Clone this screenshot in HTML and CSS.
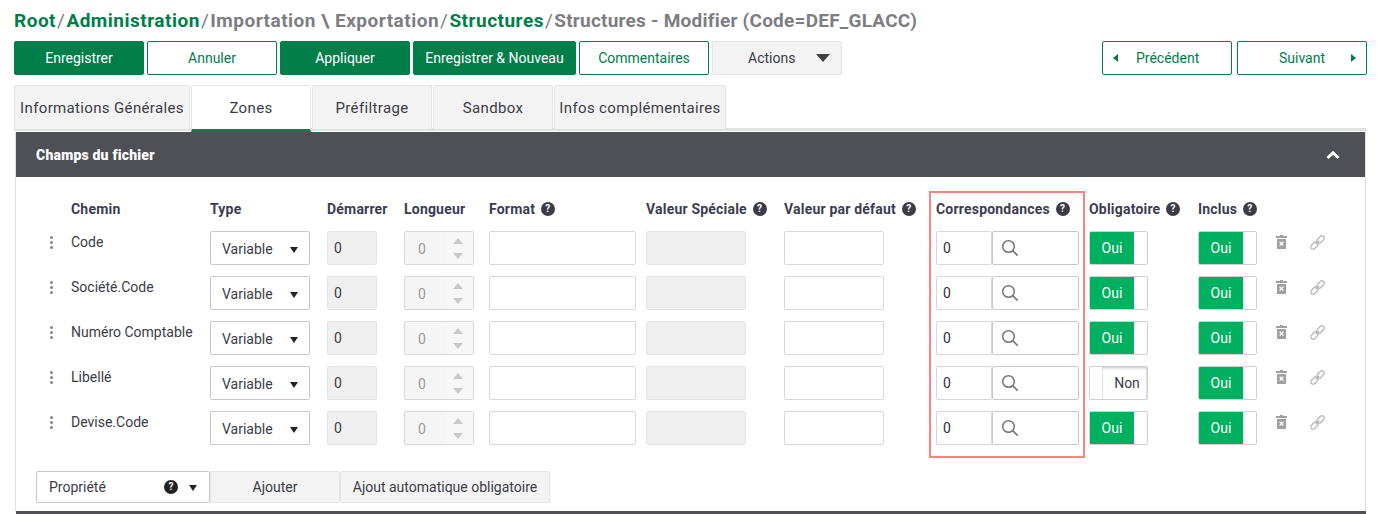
FILE: index.html
```html
<!DOCTYPE html>
<html lang="fr">
<head>
  <meta charset="UTF-8" />
  <title>Structures - Modifier</title>
  <link rel="stylesheet" href="styles.css">
</head>
<body>
  <svg class="defs" width="0" height="0">
    <symbol id="i-search" viewBox="0 0 18 18"><circle cx="7.5" cy="7.5" r="5.800" fill="none" stroke="#7b7673" stroke-width="1.500"/><path d="M11.700 11.700l5 5" stroke="#7b7673" stroke-width="1.700" fill="none"/></symbol>
    <symbol id="i-trash" viewBox="0 0 11 14"><path d="M4 0h3v1h4v2H0V1h4zM1 4h9v10H1z" fill="#a0a0a0"/><path d="M3.600 6.800l3.800 3.800M7.400 6.800l-3.800 3.800" stroke="#fff" stroke-width="1.300"/></symbol>
    <symbol id="i-link" viewBox="0 0 15 15"><g fill="none" stroke="#b5b5b5" stroke-width="1.200" transform="rotate(-45 7.500 7.500)"><rect x="-1" y="5.200" width="8.500" height="4.600" rx="2.300"/><rect x="7.500" y="5.200" width="8.500" height="4.600" rx="2.300"/><path d="M5 7.500h5"/></g></symbol>
  </svg>

  <div class="breadcrumb">
    <a>Root</a><i>/</i><a>Administration</a><i>/</i><span>Importation \ Exportation</span><i>/</i><a>Structures</a><i>/</i><span class="current">Structures - Modifier (Code=DEF_GLACC)</span>
  </div>

  <div class="toolbar">
    <button class="btn primary">Enregistrer</button>
    <button class="btn outline">Annuler</button>
    <button class="btn primary">Appliquer</button>
    <button class="btn primary wide">Enregistrer &amp; Nouveau</button>
    <button class="btn outline">Commentaires</button>
    <button class="btn plain actions">Actions<b class="caret-big"></b></button>
    <div class="pager">
      <button class="btn outline prev"><b class="arrow-left"></b>Précédent</button>
      <button class="btn outline next">Suivant<b class="arrow-right"></b></button>
    </div>
  </div>

  <div class="tabs">
    <div class="tab first">Informations Générales</div>
    <div class="tab active">Zones</div>
    <div class="tab">Préfiltrage</div>
    <div class="tab">Sandbox</div>
    <div class="tab last">Infos complémentaires</div>
  </div>

  <div class="panel">
    <div class="panel-head">
      <span>Champs du fichier</span>
      <svg class="chevron" width="14" height="10" viewBox="0 0 14 10"><path d="M1.500 8L7 2.800 12.500 8" fill="none" stroke="#fff" stroke-width="3"/></svg>
    </div>

    <div class="fields">
      <div class="red-box"></div>

      <div class="row head">
        <div></div>
        <div>Chemin</div>
        <div>Type</div>
        <div>Démarrer</div>
        <div>Longueur</div>
        <div>Format <em>?</em></div>
        <div>Valeur Spéciale <em>?</em></div>
        <div>Valeur par défaut <em>?</em></div>
        <div>Correspondances <em>?</em></div>
        <div>Obligatoire <em>?</em></div>
        <div>Inclus <em>?</em></div>
      </div>

      <div class="row">
        <div class="drag"><s></s><s></s><s></s></div>
        <div class="path">Code</div>
        <div class="select">Variable<b></b></div>
        <div class="readonly start">0</div>
        <div class="spin">0<span><b></b><b></b></span></div>
        <div class="input format"></div>
        <div class="readonly special"></div>
        <div class="input default"></div>
        <div class="match"><div class="input num">0</div><div class="input find"><svg width="18" height="18"><use href="#i-search"/></svg></div></div>
        <div class="toggle on"><span>Oui</span><i></i></div>
        <div class="toggle on"><span>Oui</span><i></i></div>
        <svg class="trash" width="11" height="14"><use href="#i-trash"/></svg>
        <svg class="link" width="15" height="15"><use href="#i-link"/></svg>
      </div>

      <div class="row">
        <div class="drag"><s></s><s></s><s></s></div>
        <div class="path">Société.Code</div>
        <div class="select">Variable<b></b></div>
        <div class="readonly start">0</div>
        <div class="spin">0<span><b></b><b></b></span></div>
        <div class="input format"></div>
        <div class="readonly special"></div>
        <div class="input default"></div>
        <div class="match"><div class="input num">0</div><div class="input find"><svg width="18" height="18"><use href="#i-search"/></svg></div></div>
        <div class="toggle on"><span>Oui</span><i></i></div>
        <div class="toggle on"><span>Oui</span><i></i></div>
        <svg class="trash" width="11" height="14"><use href="#i-trash"/></svg>
        <svg class="link" width="15" height="15"><use href="#i-link"/></svg>
      </div>

      <div class="row">
        <div class="drag"><s></s><s></s><s></s></div>
        <div class="path">Numéro Comptable</div>
        <div class="select">Variable<b></b></div>
        <div class="readonly start">0</div>
        <div class="spin">0<span><b></b><b></b></span></div>
        <div class="input format"></div>
        <div class="readonly special"></div>
        <div class="input default"></div>
        <div class="match"><div class="input num">0</div><div class="input find"><svg width="18" height="18"><use href="#i-search"/></svg></div></div>
        <div class="toggle on"><span>Oui</span><i></i></div>
        <div class="toggle on"><span>Oui</span><i></i></div>
        <svg class="trash" width="11" height="14"><use href="#i-trash"/></svg>
        <svg class="link" width="15" height="15"><use href="#i-link"/></svg>
      </div>

      <div class="row">
        <div class="drag"><s></s><s></s><s></s></div>
        <div class="path">Libellé</div>
        <div class="select">Variable<b></b></div>
        <div class="readonly start">0</div>
        <div class="spin">0<span><b></b><b></b></span></div>
        <div class="input format"></div>
        <div class="readonly special"></div>
        <div class="input default"></div>
        <div class="match"><div class="input num">0</div><div class="input find"><svg width="18" height="18"><use href="#i-search"/></svg></div></div>
        <div class="toggle off"><i></i><span>Non</span></div>
        <div class="toggle on"><span>Oui</span><i></i></div>
        <svg class="trash" width="11" height="14"><use href="#i-trash"/></svg>
        <svg class="link" width="15" height="15"><use href="#i-link"/></svg>
      </div>

      <div class="row">
        <div class="drag"><s></s><s></s><s></s></div>
        <div class="path">Devise.Code</div>
        <div class="select">Variable<b></b></div>
        <div class="readonly start">0</div>
        <div class="spin">0<span><b></b><b></b></span></div>
        <div class="input format"></div>
        <div class="readonly special"></div>
        <div class="input default"></div>
        <div class="match"><div class="input num">0</div><div class="input find"><svg width="18" height="18"><use href="#i-search"/></svg></div></div>
        <div class="toggle on"><span>Oui</span><i></i></div>
        <div class="toggle on"><span>Oui</span><i></i></div>
        <svg class="trash" width="11" height="14"><use href="#i-trash"/></svg>
        <svg class="link" width="15" height="15"><use href="#i-link"/></svg>
      </div>

      <div class="add-row">
        <div class="select prop">Propriété<em>?</em><b></b></div>
        <button class="btn plain add">Ajouter</button>
        <button class="btn plain auto">Ajout automatique obligatoire</button>
      </div>
    </div>
  </div>
  <div class="panel-foot"></div>
</body>
</html>
```

FILE: styles.css
```css
html, body {
  height: 514px;
  overflow: hidden;
}

body {
  margin: 0;
  padding: 0 14px;
  background: #fff;
  font-family: "Roboto", sans-serif;
  font-size: 14px;
  color: #3c3c46;
}

.defs {
  position: absolute;
}

.breadcrumb {
  height: 41px;
  line-height: 42px;
  font-size: 19px;
  font-weight: 700;
  letter-spacing: 0.5px;
  color: #7d7d82;
  white-space: nowrap;
}

.breadcrumb a {
  color: #007e4a;
}

.breadcrumb i {
  font-style: normal;
  font-weight: 400;
  margin: 0 1px;
}

.breadcrumb .current {
  letter-spacing: 0.23px;
}

.toolbar {
  display: flex;
  gap: 3px;
  height: 34px;
}

.btn {
  width: 130px;
  height: 34px;
  padding: 0;
  font: 14px "Roboto", sans-serif;
  border-radius: 2px;
  cursor: pointer;
}

.btn.primary {
  background: #007e4a;
  border: 1px solid #007e4a;
  color: #fff;
}

.btn.outline {
  background: #fff;
  border: 1px solid #007e4a;
  color: #007e4a;
}

.btn.plain {
  background: #f3f3f3;
  border: 1px solid #e4e4e4;
  color: #3c3c46;
}

.btn.wide {
  width: 163px;
}

.actions {
  display: flex;
  align-items: center;
  justify-content: space-between;
  padding: 0 11px 0 35px;
}

.caret-big {
  border: 7px solid transparent;
  border-top: 8px solid #3f3f44;
  border-bottom: 0;
}

.pager {
  display: flex;
  gap: 5px;
  margin-left: auto;
}

.prev, .next {
  display: flex;
  align-items: center;
}

.prev {
  padding: 0 0 0 10px;
  gap: 18px;
}

.next {
  justify-content: flex-end;
  padding-right: 10px;
  gap: 26px;
}

.arrow-left, .arrow-right {
  border: 4px solid transparent;
  border-left-width: 0;
  border-right: 5px solid #007e4a;
}

.arrow-right {
  border-right-width: 0;
  border-left: 5px solid #007e4a;
}

.tabs {
  display: flex;
  gap: 1px;
  height: 43px;
  margin-top: 10px;
  border-bottom: 3px solid #e2e2e0;
  width: 1353px;
}

.tab {
  width: 118px;
  height: 43px;
  box-sizing: content-box;
  display: flex;
  align-items: center;
  justify-content: center;
  background: #f3f3f3;
  border: 1px solid #e4e4e4;
  border-bottom: 0;
  border-radius: 2px 2px 0 0;
  font-size: 15px;
  letter-spacing: 0.35px;
  white-space: nowrap;
}

.tab.first {
  width: 174px;
}

.tab.last {
  width: 170px;
}

.tab.active {
  background: #fff;
  height: 43px;
  border-bottom: 3px solid #007e4a;
}

.panel {
  margin: 1px 0 0 1px;
  width: 1349px;
  border-left: 1px solid #dedede;
  border-right: 1px solid #dedede;
  height: 379px;
}

.panel-head {
  height: 45px;
  background: #4f5055;
  color: #fff;
  font-size: 14px;
  font-weight: 900;
  letter-spacing: 0.2px;
  display: flex;
  align-items: center;
  justify-content: space-between;
  padding: 0 25px 0 20px;
}

.fields {
  position: relative;
  padding: 24px 0 0 20px;
}

/* annotation drawn over the Correspondances column */
.red-box {
  position: absolute;
  left: 913px;
  top: 14px;
  width: 152px;
  height: 263px;
  border: 2px solid #ff8080;
}

.row {
  display: grid;
  grid-template-columns: 35px 139px 117px 77px 85px 157px 138px 152px 153px 109px 78px 34px 15px;
  height: 34px;
  margin-bottom: 11px;
  align-items: start;
}

.row.head {
  height: 16px;
  margin-bottom: 14px;
  font-size: 14px;
  font-weight: 700;
  letter-spacing: 0.2px;
  line-height: 16px;
  white-space: nowrap;
  color: #3c3c50;
}

em {
  display: inline-block;
  width: 14px;
  height: 14px;
  margin-left: 2px;
  border-radius: 50%;
  background: #3c3c46;
  color: #fff;
  font: 700 10px/14px "Roboto", sans-serif;
  letter-spacing: 0;
  text-align: center;
  vertical-align: top;
  margin-top: 1px;
}

.drag {
  display: flex;
  flex-direction: column;
  gap: 2px;
  padding: 5px 0 0 14px;
}

.drag s {
  width: 3px;
  height: 3px;
  border-radius: 50%;
  background: #858585;
}

.path {
  line-height: 22px;
  white-space: nowrap;
}

.select, .input, .readonly, .spin {
  box-sizing: border-box;
  height: 34px;
  line-height: 32px;
  border: 1px solid #d8d8d8;
  border-radius: 2px;
  background: #fff;
}

.select {
  width: 100px;
  border-color: #c8c8c8;
  padding: 2px 11px 0;
  display: flex;
  justify-content: space-between;
  align-items: center;
}

.select b {
  border: 4px solid transparent;
  border-top: 6px solid #222;
  border-bottom: 0;
  margin-top: 2px;
}

.readonly {
  background: #f0f0f0;
  border-color: #e4e4e4;
}

.start {
  width: 50px;
  padding-left: 6px;
}

.special, .default {
  width: 100px;
}

.format {
  width: 147px;
}

.spin {
  width: 70px;
  padding: 1px 0 0 13px;
  color: #9a9a9a;
  background: #f5f5f5;
  position: relative;
}

.spin span {
  position: absolute;
  right: 0;
  top: 0;
  bottom: 0;
  width: 28px;
  background: #f7f7f7;
}

.spin b {
  position: absolute;
  left: 8px;
  border: 5px solid transparent;
  border-top: 0;
  border-bottom: 6px solid #c8c8c8;
  top: 6px;
}

.spin b + b {
  border-bottom: 0;
  border-top: 6px solid #c8c8c8;
  top: 21px;
}

.match {
  display: flex;
}

.num {
  width: 56px;
  padding-left: 6px;
  color: #2e2e38;
}

.find {
  width: 87px;
  border-color: #c8c8c8;
  padding: 7px 0 0 8px;
}

.find svg {
  display: block;
}

.toggle {
  box-sizing: border-box;
  width: 59px;
  height: 34px;
  display: flex;
  border: 1px solid #d0d0d0;
  border-radius: 2px;
  overflow: hidden;
  line-height: 32px;
  text-align: center;
}

.toggle.on span {
  width: 44px;
  background: #00b061;
  color: #fff;
}

.toggle i {
  flex: 1;
}

.toggle.off i {
  flex: 0 0 12px;
  border-right: 1px solid #e2e2e2;
}

.toggle.off span {
  flex: 1;
  padding-left: 4px;
  box-shadow: inset 0 3px 3px -2px #c4c4c4, inset -2px 0 2px -1px #dcdcdc;
}

.trash {
  margin-top: 4px;
}

.link {
  margin-top: 4px;
}

.add-row {
  display: flex;
  margin-top: 26px;
}

.select.prop {
  width: 174px;
  height: 32px;
  line-height: 30px;
  padding: 0 12px;
  justify-content: flex-start;
}

.select.prop em {
  background: #222;
  margin: 0 11px 0 auto;
}

.add {
  height: 32px;
}

.auto {
  width: 210px;
  height: 32px;
}

.panel-foot {
  width: 1350px;
  height: 3px;
  margin: 0 0 0 2px;
  background: #4f5055;
}
```
